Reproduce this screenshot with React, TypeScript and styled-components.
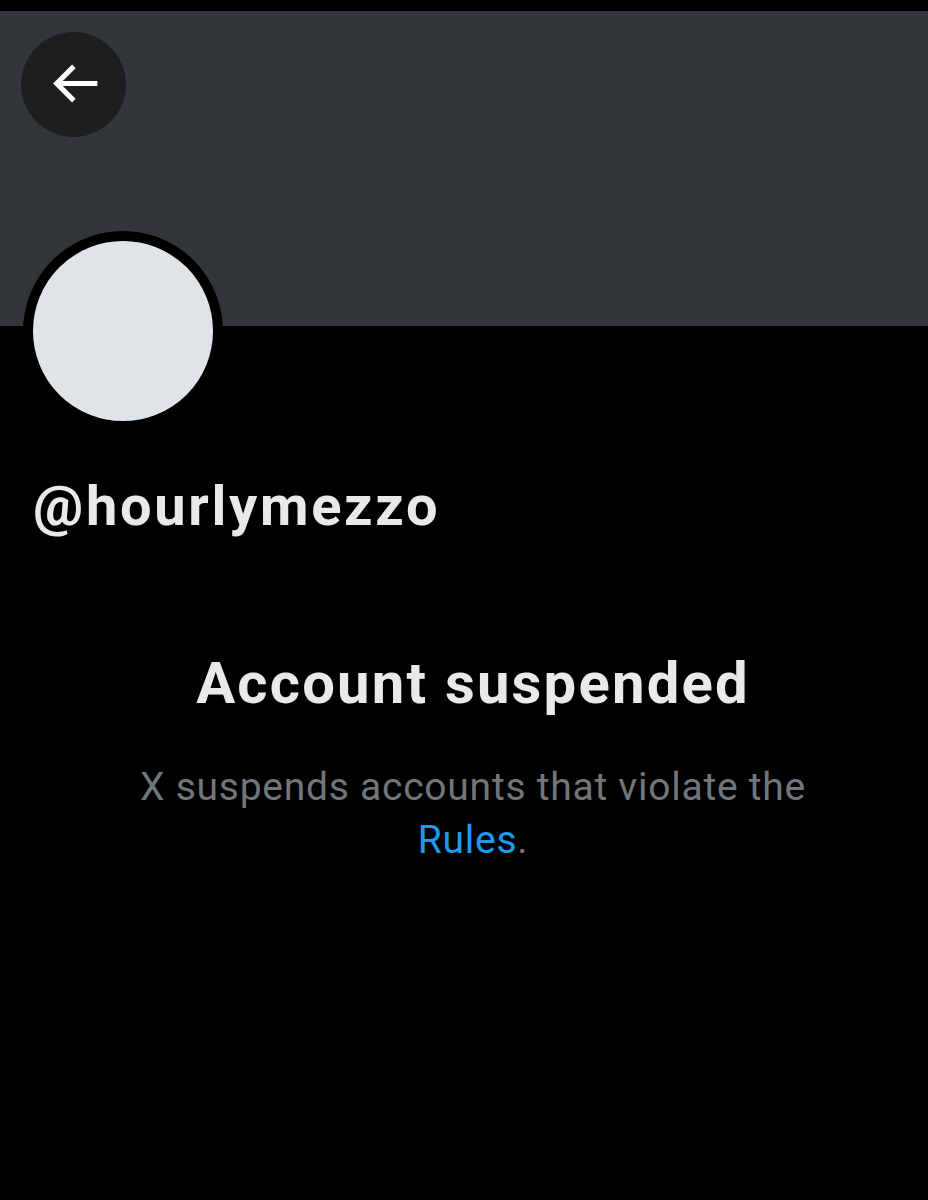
import React from "react";
import styled, { createGlobalStyle } from "styled-components";

const GlobalStyle = createGlobalStyle`
  html, body {
    margin: 0;
    padding: 0;
    background: #000000;
  }
  body {
    font-family: Roboto, "Liberation Sans", Arial, sans-serif;
    -webkit-font-smoothing: antialiased;
  }
`;

const Page = styled.div`
  width: 928px;
  min-height: 1200px;
  background: #000000;
  padding-top: 11px;
  box-sizing: border-box;
  display: flex;
  flex-direction: column;
`;

const Banner = styled.div`
  height: 315px;
  background: #333639;
  padding: 21px 0 0 21px;
  box-sizing: border-box;
  display: flex;
  align-items: flex-start;
`;

const BackButton = styled.button`
  width: 105px;
  height: 105px;
  border-radius: 50%;
  border: none;
  padding: 0;
  background: #1c1e20;
  display: flex;
  align-items: center;
  justify-content: center;
  cursor: pointer;
`;

const ArrowIcon = styled.svg`
  width: 61px;
  height: 61px;
  fill: #ffffff;
  margin-right: -2px;
  margin-top: -2px;
`;

const AvatarRow = styled.div`
  display: flex;
  padding-left: 23px;
  margin-top: -95px;
`;

const Avatar = styled.div`
  width: 180px;
  height: 180px;
  border-radius: 50%;
  background: #dfe4e8;
  border: 10px solid #000000;
`;

const Handle = styled.div`
  margin: 40px 0 0 33px;
  font-size: 56px;
  line-height: 70px;
  font-weight: 700;
  color: #e7e9ea;
  letter-spacing: 2.7px;
`;

const Notice = styled.div`
  display: flex;
  flex-direction: column;
  align-items: center;
  text-align: center;
  margin-top: 106px;
  padding-left: 18px;
`;

const Title = styled.h1`
  margin: 0;
  font-size: 58px;
  line-height: 72px;
  font-weight: 700;
  color: #e7e9ea;
  letter-spacing: 2.2px;
`;

const Description = styled.p`
  margin: 42px 0 0;
  width: 760px;
  font-size: 39px;
  line-height: 53px;
  font-weight: 400;
  color: #71767b;
  letter-spacing: 0.75px;
`;

const RulesLink = styled.a`
  color: #1d9bf0;
  text-decoration: none;
`;

export default function App() {
  return (
    <>
      <GlobalStyle />
      <Page>
        <Banner>
          <BackButton aria-label="Back">
            <ArrowIcon viewBox="0 0 24 24">
              <path d="M7.414 13l5.043 5.04-1.414 1.42L3.586 12l7.457-7.46 1.414 1.42L7.414 11H21v2H7.414z" />
            </ArrowIcon>
          </BackButton>
        </Banner>
        <AvatarRow>
          <Avatar />
        </AvatarRow>
        <Handle>@hourlymezzo</Handle>
        <Notice>
          <Title>Account suspended</Title>
          <Description>
            X suspends accounts that violate the <RulesLink href="#">Rules</RulesLink>.
          </Description>
        </Notice>
      </Page>
    </>
  );
}
